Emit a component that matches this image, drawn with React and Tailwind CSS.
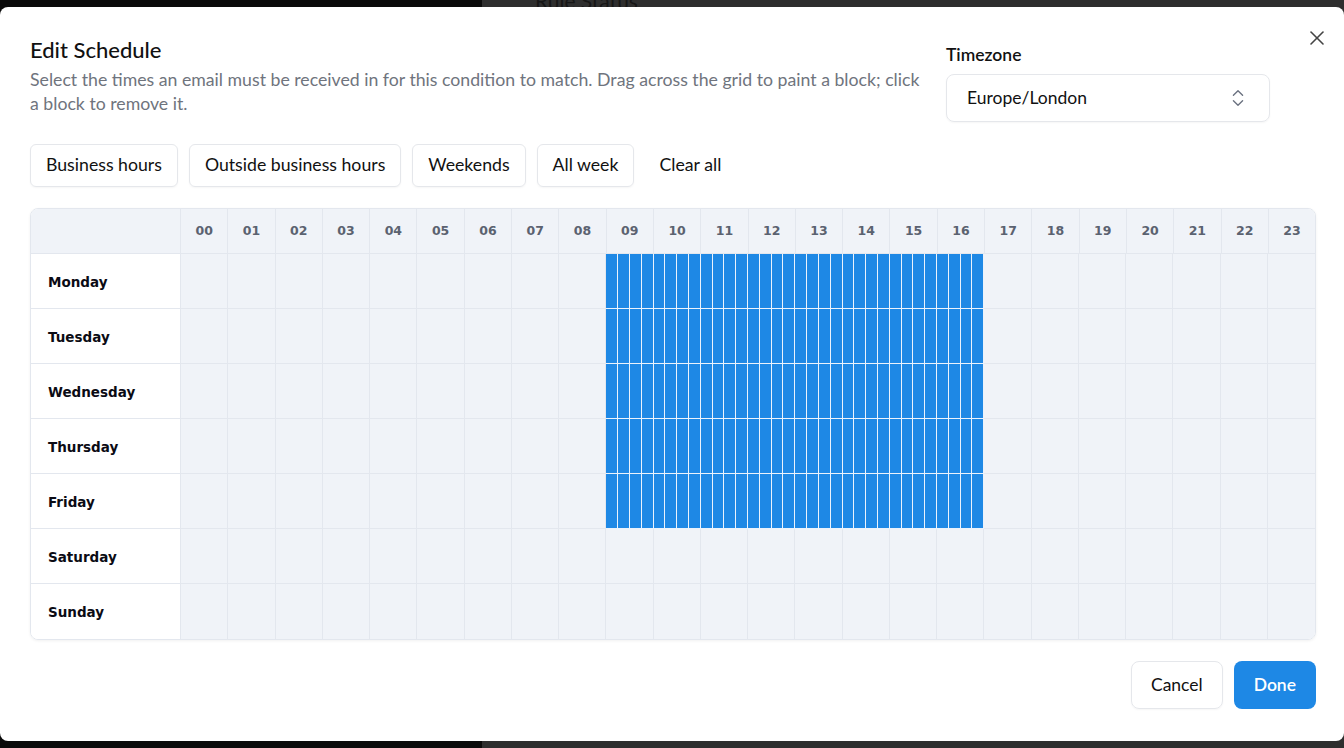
import { X, ChevronsUpDown } from 'lucide-react';

const hours = Array.from({ length: 24 }, (_, i) => String(i).padStart(2, '0'));
const days = ['Monday', 'Tuesday', 'Wednesday', 'Thursday', 'Friday', 'Saturday', 'Sunday'];
const quarters = Array.from({ length: 96 }, (_, i) => i);

function Quarter({ selected, hourEnd, last }) {
  if (selected) {
    return <div className={last ? 'bg-[#1e88e5] border-r border-[#eaf2fc]' : 'bg-[#1e88e5] border-r border-b border-[#eaf2fc]'} />;
  }
  if (hourEnd) {
    return <div className={last ? 'bg-[#f0f3f8] border-r border-[#e3e7ee]' : 'bg-[#f0f3f8] border-r border-b border-[#e3e7ee]'} />;
  }
  return <div className={last ? 'bg-[#f0f3f8]' : 'bg-[#f0f3f8] border-b border-[#e3e7ee]'} />;
}

export default function App() {
  return (
    <div className="relative w-[1344px] h-[748px] overflow-hidden flex font-['Lato',sans-serif]">
      <div className="w-[482px] bg-[#0a0a0a]" />
      <div className="flex-1 bg-[#2e2e2e] relative">
        <div className="absolute left-[53px] top-[-15px] text-[21px] text-[#161616]">Rule Status</div>
      </div>

      <div className="absolute left-0 right-0 top-[7px] bottom-[7px] bg-white rounded-lg pt-[29px] pl-[30px] pr-[28px] flex flex-col">
        <button className="absolute right-[15px] top-[19px] text-[#444]">
          <X size={24} strokeWidth={1.6} />
        </button>

        <div className="flex justify-between items-start">
          <div className="w-[905px]">
            <h2 className="text-[22px] leading-[28px] font-medium text-[#111]">Edit Schedule</h2>
            <p className="mt-[4px] text-[17.7px] leading-[24px] text-[#6f747d]">
              Select the times an email must be received in for this condition to match. Drag across the grid to paint a block; click
              <br />
              a block to remove it.
            </p>
          </div>
          <div className="w-[324px] mr-[46px] pt-[9px]">
            <div className="text-[17.5px] leading-[20px] font-semibold text-[#111]">Timezone</div>
            <div className="mt-[9px] h-[48px] border border-[#e5e7eb] rounded-lg flex items-center justify-between pl-[20px] pr-[20px] shadow-[0_1px_2px_rgba(0,0,0,0.04)]">
              <span className="text-[17.5px] text-[#111]">Europe/London</span>
              <ChevronsUpDown size={22} strokeWidth={1.5} className="text-[#6b7280]" />
            </div>
          </div>
        </div>

        <div className="mt-[22px] flex gap-[11px]">
          {['Business hours', 'Outside business hours', 'Weekends', 'All week'].map((b) => (
            <button key={b} className="h-[43px] px-[15px] border border-[#e5e7eb] rounded-md text-[17.7px] text-[#111] shadow-[0_1px_2px_rgba(0,0,0,0.04)]">
              {b}
            </button>
          ))}
          <button className="h-[43px] px-[14px] rounded-md text-[17.7px] text-[#111]">Clear all</button>
        </div>

        <div className="mt-[21px] w-[1286px] border border-[#e3e7ee] rounded-lg overflow-hidden shadow-[0_1px_3px_rgba(0,0,0,0.06)] font-['DejaVu_Sans',sans-serif]">
          <div className="flex h-[45px] bg-[#f0f3f8] border-b border-[#e3e7ee]">
            <div className="w-[150px] shrink-0 border-r border-[#e3e7ee]" />
            {hours.map((h, i) => (
              <div
                key={h}
                className={i === 23 ? 'flex-1 flex items-center justify-center text-[12.5px] font-bold text-[#5b6270]' : 'flex-1 flex items-center justify-center border-r border-[#e3e7ee] text-[12.5px] font-bold text-[#5b6270]'}
              >
                {h}
              </div>
            ))}
          </div>
          {days.map((d, di) => {
            const last = di === 6;
            return (
              <div key={d} className="flex h-[55px]">
                <div className={last ? 'w-[150px] shrink-0 border-r border-[#e3e7ee] bg-white flex items-center pl-[17px] pt-[2px] text-[13.5px] font-bold text-[#0b0b14]' : 'w-[150px] shrink-0 border-r border-b border-[#e3e7ee] bg-white flex items-center pl-[17px] pt-[2px] text-[13.5px] font-bold text-[#0b0b14]'}>
                  {d}
                </div>
                <div className="flex-1 grid grid-cols-[repeat(96,minmax(0,1fr))]">
                  {quarters.map((q) => {
                    const h = Math.floor(q / 4);
                    const selected = di < 5 && h >= 9 && h < 17;
                    return <Quarter key={q} selected={selected} hourEnd={q % 4 === 3 && q !== 95} last={last} />;
                  })}
                </div>
              </div>
            );
          })}
        </div>

        <div className="mt-[21px] flex justify-end gap-[11px]">
          <button className="h-[48px] px-[19px] border border-[#e5e7eb] rounded-lg text-[17.5px] text-[#111] shadow-[0_1px_2px_rgba(0,0,0,0.04)]">Cancel</button>
          <button className="h-[48px] px-[20px] bg-[#1e88e5] rounded-lg text-[17.5px] font-semibold text-white">Done</button>
        </div>
      </div>
    </div>
  );
}
